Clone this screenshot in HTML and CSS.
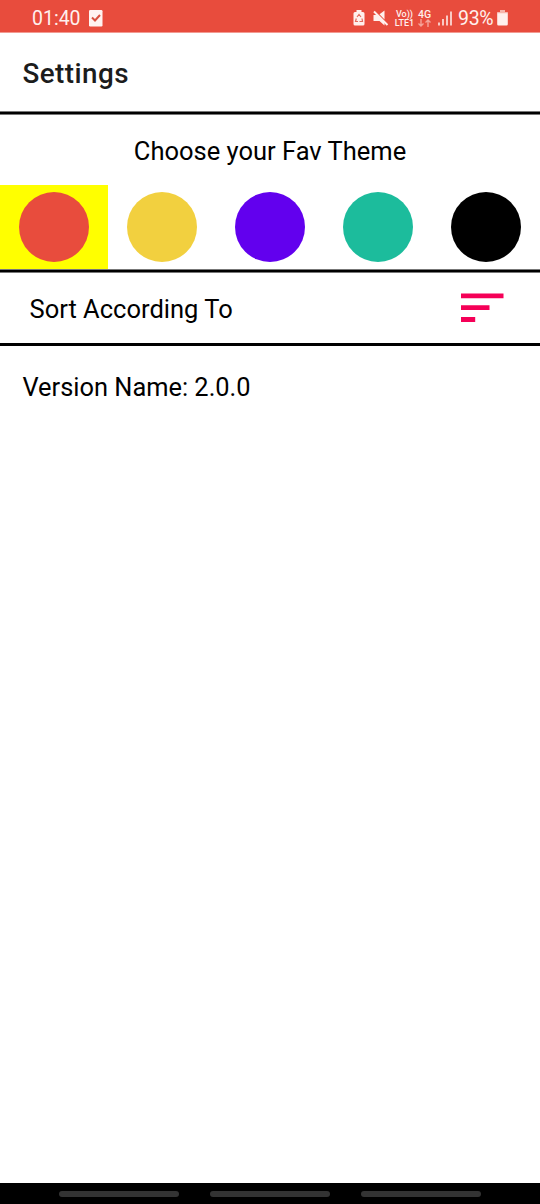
FILE: index.html
```html
<!DOCTYPE html>
<html lang="en">
<head>
<meta charset="utf-8">
<title>Settings</title>
<link rel="stylesheet" href="styles.css">
</head>
<body>
<div class="screen">
  <header class="status">
    <span class="clock">01:40</span>
    <svg class="check" width="14" height="17" viewBox="0 0 14 17"><rect width="13.500" height="16.500" rx="1.200" fill="#fff3f1"/><path d="M3 7.500l3 3 5-5.500" fill="none" stroke="#d8503f" stroke-width="2"/></svg>
    <svg class="battery-saver" width="12" height="16" viewBox="0 0 12 16"><path d="M3.500 0h5v2h1.500q1.500 0 1.500 1.500v10.500q0 1.500-1.500 1.500h-8q-1.500 0-1.500-1.500v-10.500q0-1.500 1.500-1.500h1.500z" fill="#fff0ed"/><path d="M4 7l2-2.500 2 2.500M9 8.500l.5 3h-3M5 11.500h-2.500l.8-3" fill="none" stroke="#e56a5c" stroke-width="1.200"/></svg>
    <svg class="mute" width="16" height="16" viewBox="0 0 16 16"><path d="M.5 5h4l7 7v3.500l-5-4.500h-6zM6.500 4.200l5-3.700v9z" fill="#fff0ed"/><path d="M1 1.500l13.500 13.500" stroke="#fff0ed" stroke-width="2"/></svg>
    <span class="volte"><span>Vo))</span><span>LTE1</span></span>
    <span class="network"><span>4G</span><svg width="13" height="8" viewBox="0 0 13 8"><path d="M3 0v7M.5 4.500l2.500 2.500 2.500-2.500M10 8V1M7.500 3.500l2.500-2.500 2.500 2.500" fill="none" stroke="#f5a399" stroke-width="1.400"/></svg></span>
    <svg class="signal" width="15" height="15" viewBox="0 0 15 15"><path d="M1 11.500v3M5 8v6.500M9 4.500v10M13 .5v14" stroke="#fbd8d3" stroke-width="1.800"/></svg>
    <span class="percent">93%</span>
    <svg class="battery" width="11" height="16" viewBox="0 0 11 16"><path d="M3 0h5v2h1.500q1.300 0 1.300 1.300v10.900q0 1.300-1.300 1.300h-8q-1.300 0-1.300-1.300v-10.900q0-1.300 1.300-1.300h1.500z" fill="#fff0ed"/><path d="M3 0h5v2h1.500q1.300 0 1.300 1.300h-10.600q0-1.300 1.300-1.300h1.500z" fill="#f6b5ac"/></svg>
  </header>
  <h1 class="title"><span>Settings</span></h1>
  <div class="rule soft"></div>
  <main>
    <h2 class="theme-title"><span>Choose your Fav Theme</span></h2>
    <div class="themes">
      <div class="theme selected"><i class="dot red"></i></div>
      <div class="theme"><i class="dot gold"></i></div>
      <div class="theme"><i class="dot violet"></i></div>
      <div class="theme"><i class="dot teal"></i></div>
      <div class="theme"><i class="dot black"></i></div>
    </div>
    <div class="rule soft"></div>
    <div class="sort"><span>Sort According To</span>
      <svg width="43" height="30" viewBox="0 0 43 30"><path d="M0 .5h42.500v4.800H0zM0 12.300h28.500v4.800H0zM0 24.100h14.200v4.800H0z" fill="#f50057"/></svg>
    </div>
    <div class="rule"></div>
    <p class="version"><span>Version Name: 2.0.0</span></p>
  </main>
  <nav class="navbar"><i></i><i></i><i></i></nav>
</div>
</body>
</html>
```
FILE: styles.css
```css
* { box-sizing: border-box; }
body { margin: 0; background: #fff; font-family: Roboto, sans-serif; color: #000; }
.screen { display: flex; flex-direction: column; width: 540px; height: 1204px; }
.status { display: flex; align-items: flex-start; height: 33px; flex: none; padding: 10px 0 0 32px; background: #e84c3d; border-bottom: 1px solid #f29a91; color: #fff0ed; }
.clock, .percent { font-size: 19.5px; line-height: 18px; white-space: nowrap; }
.clock { width: 57px; }
.check { flex: none; }
.battery-saver { flex: none; margin-left: 250px; }
.mute { flex: none; margin-left: 8px; }
.volte { display: flex; flex-direction: column; align-items: center; width: 21px; margin-left: 5px; font-size: 9px; line-height: 9px; font-weight: 500; white-space: nowrap; }
.network { display: flex; flex-direction: column; align-items: center; width: 14px; margin-left: 2.5px; font-size: 10.5px; line-height: 9px; font-weight: 500; }
.signal { flex: none; margin-left: 6px; margin-top: .5px; }
.percent { width: 39px; margin-left: 5.5px; font-size: 19.5px; letter-spacing: -.3px; }
.battery { flex: none; }
.title { margin: 0; height: 78px; padding: 0 22.5px; font-size: 27.8px; line-height: 81px; font-weight: 500; letter-spacing: .45px; color: #1c1c1c; }
.rule { height: 3px; background: #000; }
.rule.soft { height: 4px; border-top: 1px solid #777; border-bottom: 1px solid #777; }
.theme-title { margin: 0; height: 70px; font-size: 25.5px; line-height: 72px; font-weight: 400; text-align: center; }
.themes { display: grid; grid-template-columns: repeat(5, 1fr); height: 84px; }
.theme { display: flex; align-items: center; justify-content: center; }
.selected { background: #ff0; }
.dot { width: 70.5px; height: 70.5px; border-radius: 50%; }
.red { background: #e84c3d; }
.gold { background: #f2d03f; }
.violet { background: #6200ee; }
.teal { background: #1cbc9c; }
.black { background: #000; }
.sort { display: flex; align-items: center; justify-content: space-between; height: 70px; padding: 0 36px 0 29.5px; font-size: 25.5px; line-height: 32px; }
.sort span { padding-top: 1px; }
.version { margin: 0; padding: 0 22.5px; font-size: 25.4px; line-height: 82px; }
.navbar { display: flex; flex: none; justify-content: center; gap: 31px; height: 21px; margin-top: auto; padding-top: 8px; background: #000; }
.navbar i { width: 120px; height: 6px; border-radius: 3px; background: #333; }
```
